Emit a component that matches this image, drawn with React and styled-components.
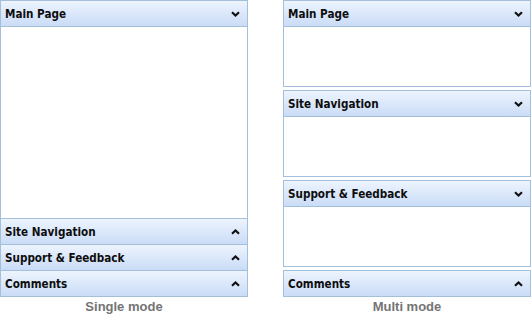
import React from "react";
import styled, { createGlobalStyle } from "styled-components";

const Global = createGlobalStyle`
  html, body { margin: 0; padding: 0; background: #ffffff; }
  body { width: 531px; height: 315px; overflow: hidden; }
`;

const Page = styled.div`
  display: flex;
  gap: 35px;
  width: 531px;
`;

const Column = styled.div`
  display: flex;
  flex-direction: column;
  width: 248px;
`;

const Stack = styled.div`
  display: flex;
  flex-direction: column;
  gap: 3px;
  height: 297px;
`;

const Accordion = styled.div`
  display: flex;
  flex-direction: column;
  height: 297px;
  box-sizing: border-box;
  border: 1px solid #a3bfda;
`;

const Panel = styled.div`
  display: flex;
  flex-direction: column;
  box-sizing: border-box;
  border: 1px solid #a3bfda;
`;

const Header = styled.div`
  display: flex;
  align-items: center;
  justify-content: space-between;
  flex: none;
  padding: 1px 7px 0 4px;
  box-sizing: border-box;
  background: linear-gradient(to bottom, #edf4fd 0%, #dde9fb 45%, #cadcf6 100%);
  border-top: ${(p) => (p.$first ? "none" : "1px solid #a3bfda")};
  height: ${(p) => (p.$first ? "25px" : "26px")};
  font-family: "DejaVu Sans Condensed", "DejaVu Sans", sans-serif;
  font-stretch: condensed;
  font-weight: bold;
  font-size: 11.6px;
  color: #0d0d0d;
`;

const Body = styled.div`
  background: #fff;
  border-top: 1px solid #a3bfda;
  box-sizing: border-box;
  flex: ${(p) => (p.$grow ? "1" : "none")};
  height: ${(p) => (p.$grow ? "auto" : "60px")};
`;

const Caption = styled.div`
  height: 18px;
  padding-top: 1px;
  line-height: 18px;
  text-align: center;
  font-family: "Liberation Sans", Arial, sans-serif;
  font-weight: bold;
  font-size: 13px;
  color: #747474;
`;

const Chevron = ({ up }) => (
  <svg width="9" height="6" viewBox="0 0 9 6" style={{ display: "block" }}>
    <polyline
      fill="none"
      stroke="#111"
      strokeWidth="2.2"
      strokeLinejoin="miter"
      points={up ? "1,4.8 4.5,1.5 8,4.8" : "1,1.2 4.5,4.5 8,1.2"}
    />
  </svg>
);

const single = [
  { title: "Main Page", open: true },
  { title: "Site Navigation" },
  { title: "Support & Feedback" },
  { title: "Comments" },
];

const multi = [
  { title: "Main Page", open: true },
  { title: "Site Navigation", open: true },
  { title: "Support & Feedback", open: true },
  { title: "Comments" },
];

export default function App() {
  return (
    <>
      <Global />
      <Page>
        <Column>
          <Accordion>
            {single.map((s, i) => (
              <React.Fragment key={s.title}>
                <Header $first={i === 0}>
                  <span>{s.title}</span>
                  <Chevron up={!s.open} />
                </Header>
                {s.open && <Body $grow />}
              </React.Fragment>
            ))}
          </Accordion>
          <Caption>Single mode</Caption>
        </Column>
        <Column>
          <Stack>
            {multi.map((s) => (
              <Panel key={s.title}>
                <Header $first>
                  <span>{s.title}</span>
                  <Chevron up={!s.open} />
                </Header>
                {s.open && <Body />}
              </Panel>
            ))}
          </Stack>
          <Caption>Multi mode</Caption>
        </Column>
      </Page>
    </>
  );
}
